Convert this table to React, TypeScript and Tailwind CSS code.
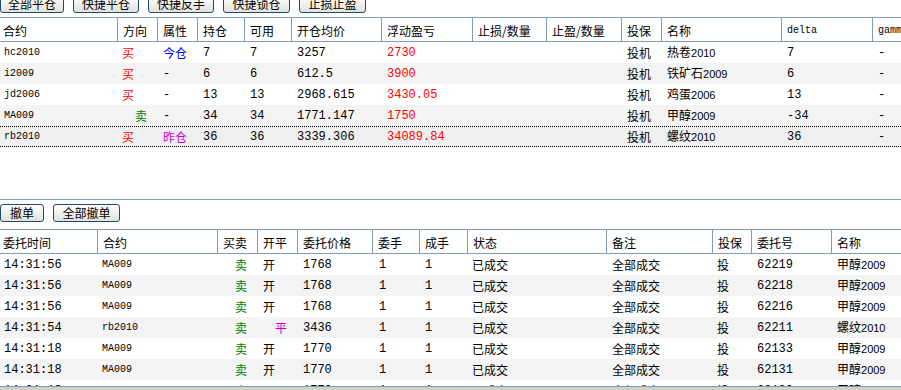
import React from "react";

const cn = "font-['Noto_Sans_CJK_SC',sans-serif] text-[12px]";
const mono = "font-['Liberation_Mono',monospace] text-[12px]";
const code = "font-['Liberation_Mono',monospace] text-[10px]";
const cell = "shrink-0 h-full flex items-center leading-none";

// column widths (each includes its 1px right rule in the header)
const posCols = ["w-[118px]", "w-[40px]", "w-[40px]", "w-[47px]", "w-[47px]", "w-[90px]", "w-[91px]", "w-[74px]", "w-[75px]", "w-[40px]", "w-[120px]", "w-[91px]", "w-[60px]"];
const ordCols = ["w-[98px]", "w-[120px]", "w-[40px]", "w-[40px]", "w-[75px]", "w-[47px]", "w-[48px]", "w-[139px]", "w-[106px]", "w-[39px]", "w-[80px]", "w-[80px]"];

const posHeads = ["合约", "方向", "属性", "持仓", "可用", "开仓均价", "浮动盈亏", "止损/数量", "止盈/数量", "投保", "名称", "delta", "gamm"];
const ordHeads = ["委托时间", "合约", "买卖", "开平", "委托价格", "委手", "成手", "状态", "备注", "投保", "委托号", "名称"];

type Pos = { code: string; dir: string; attr: string; attrCls: string; hold: string; avail: string; price: string; pnl: string; name: string; delta: string; };

const positions: Pos[] = [
    { code: "hc2010", dir: "买", attr: "今仓", attrCls: "text-[#0000ff]", hold: "7", avail: "7", price: "3257", pnl: "2730", name: "热卷2010", delta: "7" },
    { code: "i2009", dir: "买", attr: "-", attrCls: "", hold: "6", avail: "6", price: "612.5", pnl: "3900", name: "铁矿石2009", delta: "6" },
    { code: "jd2006", dir: "买", attr: "-", attrCls: "", hold: "13", avail: "13", price: "2968.615", pnl: "3430.05", name: "鸡蛋2006", delta: "13" },
    { code: "MA009", dir: "卖", attr: "-", attrCls: "", hold: "34", avail: "34", price: "1771.147", pnl: "1750", name: "甲醇2009", delta: "-34" },
    { code: "rb2010", dir: "买", attr: "昨仓", attrCls: "text-[#d000d0]", hold: "36", avail: "36", price: "3339.306", pnl: "34089.84", name: "螺纹2010", delta: "36" },
];

const orders = [
    ["14:31:56", "MA009", "开", "1768", "62219", "甲醇2009"],
    ["14:31:56", "MA009", "开", "1768", "62218", "甲醇2009"],
    ["14:31:56", "MA009", "开", "1768", "62216", "甲醇2009"],
    ["14:31:54", "rb2010", "平", "3436", "62211", "螺纹2010"],
    ["14:31:18", "MA009", "开", "1770", "62133", "甲醇2009"],
    ["14:31:18", "MA009", "开", "1770", "62131", "甲醇2009"],
    ["14:31:18", "MA009", "开", "1770", "62130", "甲醇2009"],
];

function Btn({ label, w }: { label: string; w: string }) {
    return (
        <button className={`${w} h-[18px] shrink-0 border border-[#1c4a7a] rounded-[3px] bg-linear-to-b from-white to-[#e2e2da] ${cn} leading-none text-black`}>
            {label}
        </button>
    );
}

// product name: chinese part + narrow digits
function Name({ text }: { text: string }) {
    const m = text.match(/^(\D+)(\d+)$/);
    if (!m) return <span className={cn}>{text}</span>;
    return (
        <span className="flex items-baseline leading-none">
            <span className={cn}>{m[1]}</span>
            <span className="font-['Liberation_Sans',sans-serif] text-[11px]">{m[2]}</span>
        </span>
    );
}

function HeadRow({ cols, heads }: { cols: string[]; heads: string[] }) {
    return (
        <div className="flex h-[25px] shrink-0 border-y border-[#7f9db9] bg-white">
            {heads.map((h, i) => (
                <div
                    key={i}
                    className={`${cols[i]} ${cell} border-r border-[#7f9db9] pt-[2px] overflow-hidden whitespace-nowrap ${i === 0 ? "pl-[3px]" : "pl-[5px]"} ${/^[a-z]/.test(h) ? code : cn}`}
                >
                    {h}
                </div>
            ))}
        </div>
    );
}

export default function App() {
    return (
        <div className="w-[901px] h-[390px] overflow-hidden bg-white flex flex-col text-black">

            {/* positions */}
            <div className="h-[200px] shrink-0 border-b border-[#7f9db9] flex flex-col">
                <div className="h-[17px] shrink-0 overflow-hidden">
                    <div className="flex gap-[9px] -mt-[5px]">
                        <Btn label="全部平仓" w="w-[64px]" />
                        <Btn label="快捷平仓" w="w-[66px]" />
                        <Btn label="快捷反手" w="w-[66px]" />
                        <Btn label="快捷锁仓" w="w-[67px]" />
                        <Btn label="止损止盈" w="w-[67px]" />
                    </div>
                </div>

                <HeadRow cols={posCols} heads={posHeads} />

                {positions.map((p, r) => (
                    <div
                        key={p.code}
                        className={`flex h-[21px] shrink-0 whitespace-nowrap ${r === 4 ? "bg-[#f0f0f0] border-y border-dotted border-black" : r % 2 === 1 ? "bg-[#f4f4f4]" : "bg-white"}`}
                    >
                        <div className={`${posCols[0]} ${cell} pl-[4px] ${code}`}>{p.code}</div>
                        <div className={`${posCols[1]} ${cell} ${cn} ${p.dir === "卖" ? "pl-[17px] text-[#008000]" : "pl-[4px] text-[#ff0000]"}`}>{p.dir}</div>
                        <div className={`${posCols[2]} ${cell} pl-[5px] ${p.attr === "-" ? mono : cn} ${p.attrCls}`}>{p.attr}</div>
                        <div className={`${posCols[3]} ${cell} pl-[5px] ${mono}`}>{p.hold}</div>
                        <div className={`${posCols[4]} ${cell} pl-[5px] ${mono}`}>{p.avail}</div>
                        <div className={`${posCols[5]} ${cell} pl-[5px] ${mono}`}>{p.price}</div>
                        <div className={`${posCols[6]} ${cell} pl-[5px] ${mono} text-[#ff0000]`}>{p.pnl}</div>
                        <div className={`${posCols[7]} ${cell}`} />
                        <div className={`${posCols[8]} ${cell}`} />
                        <div className={`${posCols[9]} ${cell} pl-[5px] ${cn}`}>投机</div>
                        <div className={`${posCols[10]} ${cell} pl-[5px]`}><Name text={p.name} /></div>
                        <div className={`${posCols[11]} ${cell} pl-[5px] ${mono}`}>{p.delta}</div>
                        <div className={`${posCols[12]} ${cell} pl-[5px] ${mono}`}>-</div>
                    </div>
                ))}
            </div>

            {/* orders toolbar */}
            <div className="h-[29px] shrink-0 flex gap-[9px] pt-[4px]">
                <Btn label="撤单" w="w-[44px]" />
                <Btn label="全部撤单" w="w-[67px]" />
            </div>

            {/* orders */}
            <div className="flex-1 min-h-0 overflow-hidden flex flex-col">
                <HeadRow cols={ordCols} heads={ordHeads} />
                {orders.map((o, r) => (
                    <div key={r} className={`flex h-[21px] shrink-0 whitespace-nowrap ${r % 2 === 1 ? "bg-[#f4f4f4]" : "bg-white"}`}>
                        <div className={`${ordCols[0]} ${cell} pl-[4px] ${mono}`}>{o[0]}</div>
                        <div className={`${ordCols[1]} ${cell} pl-[4px] ${code}`}>{o[1]}</div>
                        <div className={`${ordCols[2]} ${cell} pl-[17px] ${cn} text-[#008000]`}>卖</div>
                        <div className={`${ordCols[3]} ${cell} ${cn} ${o[2] === "平" ? "pl-[17px] text-[#d000d0]" : "pl-[5px]"}`}>{o[2]}</div>
                        <div className={`${ordCols[4]} ${cell} pl-[5px] ${mono}`}>{o[3]}</div>
                        <div className={`${ordCols[5]} ${cell} pl-[6px] ${mono}`}>1</div>
                        <div className={`${ordCols[6]} ${cell} pl-[5px] ${mono}`}>1</div>
                        <div className={`${ordCols[7]} ${cell} pl-[4px] ${cn}`}>已成交</div>
                        <div className={`${ordCols[8]} ${cell} pl-[5px] ${cn}`}>全部成交</div>
                        <div className={`${ordCols[9]} ${cell} pl-[4px] ${cn}`}>投</div>
                        <div className={`${ordCols[10]} ${cell} pl-[5px] ${mono}`}>{o[4]}</div>
                        <div className={`${ordCols[11]} ${cell} pl-[5px]`}><Name text={o[5]} /></div>
                    </div>
                ))}
            </div>

            {/* bottom scroll strip */}
            <div className="h-[4px] shrink-0 border-t border-[#7f9db9] bg-[#d0d0cc]" />
        </div>
    );
}
